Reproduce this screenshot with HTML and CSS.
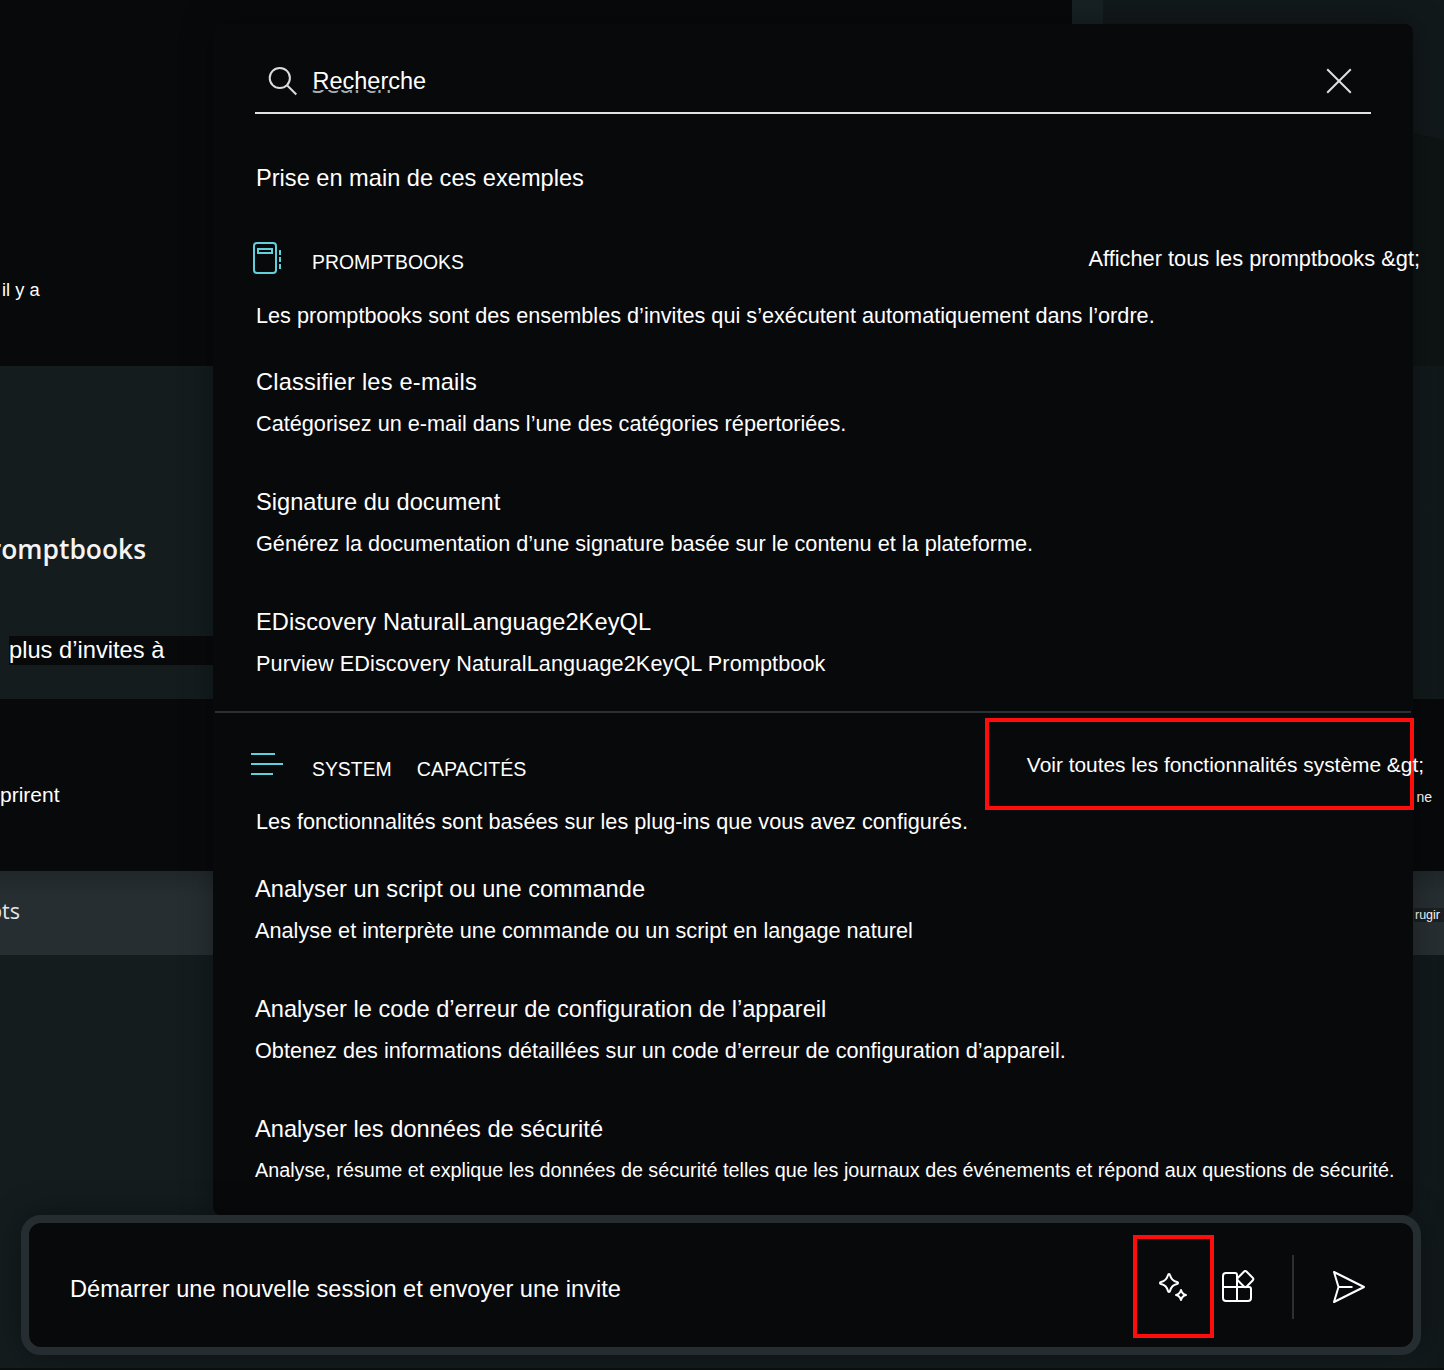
FILE: index.html
```html
<!DOCTYPE html>
<html lang="fr">
	<head>
		<meta charset="UTF-8">
		<title>Promptbooks</title>
		<link rel="stylesheet" href="styles.css">
	</head>
	<body>
		<div class="backdrop">
			<div class="hero">
				<div class="hero-card"><span>il y a</span></div>
				<div class="hero-edge"></div>
				<svg class="hero-side" width="341" height="366" viewBox="0 0 341 366"><path d="M0 66 L310 133 L341 140 V366 H0 Z" fill="#0e1414"/></svg>
			</div>
			<div class="library">
				<h2>Promptbooks</h2>
				<p>plus d’invites à</p>
			</div>
			<div class="cards">
				<span>prirent</span>
				<small>ne</small>
			</div>
			<div class="cards-foot">
				<span>Prompts</span>
				<small>rugir</small>
			</div>
		</div>

		<div class="front">
			<div class="panel">
				<div class="search">
					<svg width="32" height="32" viewBox="0 0 32 32" fill="none" stroke="#dcdcdc" stroke-width="2">
						<circle cx="12.8" cy="13" r="10.1"/>
						<path d="M20 20.3 L29.3 29.5"/>
					</svg>
					<div class="search-text"><span class="ghost">Search</span>Recherche</div>
					<svg width="26" height="26" viewBox="0 0 26 26" fill="none" stroke="#dcdedf" stroke-width="2">
						<path d="M1.2 1.2 L24.8 24.8 M24.8 1.2 L1.2 24.8"/>
					</svg>
				</div>
				<div class="intro">Prise en main de ces exemples</div>

				<div class="section books">
					<div class="head">
						<svg class="icon" width="34" height="34" viewBox="0 0 34 34" fill="none" stroke="#61d0dc" stroke-width="2">
							<rect x="3" y="2" width="22" height="30" rx="3"/>
							<rect x="7" y="8" width="14" height="4"/>
							<path d="M29 9v5 M29 16v5 M29 23v5"/>
						</svg>
						<span class="name">PROMPTBOOKS</span>
						<a class="all">Afficher tous les promptbooks &amp;gt;</a>
					</div>
					<p class="desc">Les promptbooks sont des ensembles d’invites qui s’exécutent automatiquement dans l’ordre.</p>
					<ul>
						<li>
							<h3 class="wider">Classifier les e-mails</h3>
							<p class="desc">Catégorisez un e-mail dans l’une des catégories répertoriées.</p>
						</li>
						<li>
							<h3>Signature du document</h3>
							<p class="desc">Générez la documentation d’une signature basée sur le contenu et la plateforme.</p>
						</li>
						<li>
							<h3 class="wide">EDiscovery NaturalLanguage2KeyQL</h3>
							<p class="desc wide">Purview EDiscovery NaturalLanguage2KeyQL Promptbook</p>
						</li>
					</ul>
				</div>

				<div class="section system">
					<div class="mark"></div>
					<div class="head">
						<svg class="icon" width="34" height="34" viewBox="0 0 34 34" fill="none" stroke="#61d0dc" stroke-width="2">
							<path d="M0 6h24 M0 16h32 M0 26h22"/>
						</svg>
						<span class="name">SYSTEM</span>
						<span class="name second">CAPACITÉS</span>
						<a class="all">Voir toutes les fonctionnalités système &amp;gt;</a>
					</div>
					<p class="desc lead">Les fonctionnalités sont basées sur les plug-ins que vous avez configurés.</p>
					<ul>
						<li>
							<h3>Analyser un script ou une commande</h3>
							<p class="desc">Analyse et interprète une commande ou un script en langage naturel</p>
						</li>
						<li>
							<h3>Analyser le code d’erreur de configuration de l’appareil</h3>
							<p class="desc">Obtenez des informations détaillées sur un code d’erreur de configuration d’appareil.</p>
						</li>
						<li>
							<h3>Analyser les données de sécurité</h3>
							<p class="desc small">Analyse, résume et explique les données de sécurité telles que les journaux des événements et répond aux questions de sécurité.</p>
						</li>
					</ul>
				</div>
			</div>

			<div class="composer">
				<span class="prompt">Démarrer une nouvelle session et envoyer une invite</span>
				<div class="spark">
					<svg width="31" height="31" viewBox="0 0 31 31" fill="none" stroke="#fff" stroke-width="2" stroke-linejoin="round">
						<path d="M11 3 C11.6 3 11.9 3.5 12 4 C13 8 14.5 10 19 11 C20.4 11.5 20.4 12.5 19 13 C14.5 14 13 16 12 20 C11.7 21.3 10.3 21.3 10 20 C9 16 7.5 14 3 13 C1.6 12.5 1.6 11.5 3 11 C7.5 10 9 8 10 4 C10.1 3.5 10.4 3 11 3 Z"/>
						<path d="M23 19 C23.7 22 25 23.3 28 24 C25 24.7 23.7 26 23 29 C22.3 26 21 24.7 18 24 C21 23.3 22.3 22 23 19 Z"/>
					</svg>
				</div>
				<svg class="plugins" width="34" height="34" viewBox="0 0 34 34" fill="none" stroke="#fff" stroke-width="2">
					<path d="M16 17 V5 a2 2 0 0 0 -2 -2 H5 a3 3 0 0 0 -3 3 V28 a3 3 0 0 0 3 3 H27 a3 3 0 0 0 3 -3 V19 a2 2 0 0 0 -2 -2 H2 M16 17 V31"/>
					<rect x="18.1" y="2.9" width="12.4" height="12.4" rx="2" transform="rotate(45 24.3 9.1)"/>
				</svg>
				<div class="rule"></div>
				<svg width="34" height="34" viewBox="0 0 34 34" fill="none" stroke="#fff" stroke-width="2" stroke-linejoin="round">
					<path d="M2 2 L32 17 L2 32 L6.5 17 Z M6.5 17 H20.5"/>
				</svg>
			</div>
		</div>
	</body>
</html>
```
FILE: styles.css
```css
*{
	box-sizing: border-box;
}
body{
	margin: 0;
	display: grid;
	width: 1444px;
	height: 1370px;
	overflow: hidden;
	background: #141c1e;
	color: #fff;
	font-family: "Liberation Sans", Arial, sans-serif;
	font-variant-ligatures: none;
}
h2,h3,p,ul{
	margin: 0;
	padding: 0;
	font-weight: normal;
}
ul{
	list-style: none;
}
svg{
	display: block;
	flex: none;
}

/* page behind the panel */
.backdrop,.front{
	grid-area: 1 / 1;
	min-width: 0;
}
.backdrop{
	height: 1370px;
	overflow: hidden;
	border-bottom: 2px solid #0b0f10;
	background: linear-gradient(90deg, #141c1e 0, #141c1e 1400px, #11181a 1444px);
}
.hero{
	display: flex;
	height: 366px;
	background: #12191b;
}
.hero-card{
	width: 1072px;
	padding: 275px 0 0 2px;
	background: #08090b;
	font-size: 18.3px;
	line-height: 30px;
}
.hero-edge{
	width: 31px;
	background: #172123;
}
.library{
	height: 333px;
}
.library h2{
	display: flex;
	justify-content: flex-end;
	width: 146px;
	padding-top: 163px;
	color: #f4f4f4;
	font: 600 26.4px/40px "Open Sans", sans-serif;
}
.library p{
	width: 204px;
	margin: 67px 0 0 9px;
	background: #08090b;
	font-size: 23.7px;
	line-height: 29px;
}
.cards{
	display: flex;
	justify-content: space-between;
	height: 172px;
	padding: 81px 12px 0 0;
	background: #08090b;
	font-size: 21px;
	line-height: 30px;
}
.cards small{
	padding-top: 2px;
	font-size: 14px;
}
.cards-foot{
	display: flex;
	align-items: center;
	justify-content: space-between;
	height: 84px;
	background: linear-gradient(#20272a, #272e31 24px);
}
.cards-foot span{
	display: flex;
	justify-content: flex-end;
	width: 20px;
	padding-bottom: 5px;
	color: #e4e6e7;
	font: 21.5px/30px "Open Sans", sans-serif;
}
.cards-foot small{
	width: 30px;
	margin-top: 3px;
	padding-left: 1px;
	background: #1b2022;
	font-size: 12.5px;
	line-height: 14px;
}

.front{
	position: relative;
	padding: 24px 23px 0 21px;
}
.panel{
	width: 1200px;
	height: 1191px;
	margin-left: 192px;
	padding: 26px 42px 0;
	border-radius: 8px;
	background: #08090b;
	box-shadow: 0 0 32px rgba(0,0,0,.35);
	white-space: nowrap;
}
.search{
	display: flex;
	align-items: center;
	height: 64px;
	padding: 0 19px 0 12px;
	border-bottom: 2px solid #e0e2e3;
}
.search-text{
	position: relative;
	flex: 1;
	margin-left: 13.5px;
	font-size: 23.5px;
	line-height: 30px;
}
/* only the lower edge of the placeholder shows */
.ghost{
	position: absolute;
	left: -1px;
	top: 2px;
	color: #a9afb1;
	font: 25.4px/30px "Open Sans", sans-serif;
	clip-path: inset(22px 0 5px 0);
}
.intro{
	margin: 49px 0 0 1px;
	font-size: 23.6px;
	line-height: 30px;
}
.section{
	position: relative;
	padding-top: 46px;
}
.books .desc,.books h3{
	padding-left: 1px;
}
.system{
	margin: 32px -40px 0;
	padding: 33px 40px 0;
	border-top: 2px solid #2a3033;
}
.head{
	position: relative;
	display: flex;
	align-items: center;
	height: 40px;
}
.icon{
	margin: -3px 27px 0 -4px;
}
.name{
	padding-top: 6px;
	font-size: 19.4px;
}
.second{
	margin-left: 25px;
	font-size: 19.6px;
}
.all{
	margin: -1px -49px 0 auto;
	font-size: 21.8px;
}
.system .all{
	margin-top: -2px;
	margin-right: -53px;
	font-size: 20.9px;
}
.desc{
	font-size: 21.68px;
	line-height: 30px;
}
.head + .desc{
	margin-top: 22px;
}
.lead{
	margin-bottom: 37px;
	padding-left: 1px;
	line-height: 28px;
}
.small{
	font-size: 19.78px;
	line-height: 28px;
}
.section ul{
	display: grid;
	gap: 48px;
	margin-top: 36px;
}
.section h3{
	margin-bottom: 12px;
	font-size: 23.63px;
	line-height: 30px;
}
.wide{
	letter-spacing: .08px;
}
.wider{
	letter-spacing: .2px;
}
/* red frame round the link */
.mark{
	position: absolute;
	top: 5px;
	right: -3px;
	width: 429px;
	height: 92px;
	border: 4px solid #ff0d0d;
}
.system .lead + ul{
	margin-top: 0;
	padding-top: 1px;
}

.composer{
	display: flex;
	align-items: center;
	width: 1400px;
	height: 140px;
	padding: 3px 47px 0 41px;
	border: 8px solid #262d30;
	border-radius: 20px;
	background: #08090b;
	box-shadow: 0 0 32px rgba(0,0,0,.35);
}
.prompt{
	flex: 1;
	padding-top: 4px;
	font-size: 23.6px;
	line-height: 30px;
}
.spark{
	display: flex;
	align-items: center;
	justify-content: center;
	width: 81px;
	height: 103px;
	border: 4px solid #ff0d0d;
}
.plugins{
	margin-left: 7px;
}
.rule{
	width: 2px;
	height: 64px;
	margin: 0 38px 0 37px;
	background: #2a3033;
}
```
